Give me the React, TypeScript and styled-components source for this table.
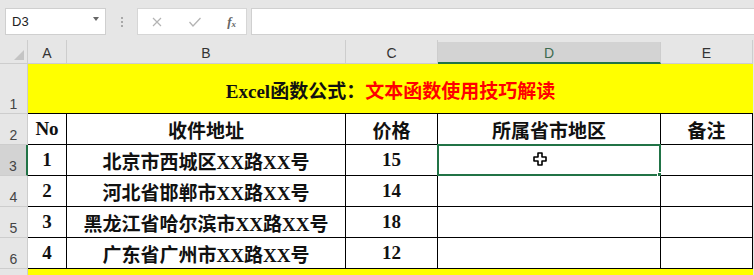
import React from "react";
import styled, { createGlobalStyle } from "styled-components";

const COLS = "28px 39px 279px 92px 223px 92px";
const GREEN = "#217346";

const rows = [
    { no: "1", addr: "北京市西城区XX路XX号", price: "15" },
    { no: "2", addr: "河北省邯郸市XX路XX号", price: "14" },
    { no: "3", addr: "黑龙江省哈尔滨市XX路XX号", price: "18" },
    { no: "4", addr: "广东省广州市XX路XX号", price: "12" },
];

export default function App() {
    return (
        <>
            <GlobalStyle />
            <Page>
                {/* --- FORMULA BAR --- */}
                <Toolbar>
                    <NameBox>
                        <span>D3</span>
                        <DropArrow />
                    </NameBox>
                    <Grip>
                        <i />
                        <i />
                        <i />
                    </Grip>
                    <FxBox>
                        <svg width="12" height="12" viewBox="0 0 12 12">
                            <path d="M2 2 L10 10 M10 2 L2 10" stroke="#b4b4b4" strokeWidth="1.2" fill="none" />
                        </svg>
                        <svg width="14" height="12" viewBox="0 0 14 12">
                            <path d="M1.5 6 L5 10 L12.5 2" stroke="#b4b4b4" strokeWidth="1.3" fill="none" />
                        </svg>
                        <FxLabel>
                            f<sub>x</sub>
                        </FxLabel>
                    </FxBox>
                    <FormulaInput />
                </Toolbar>

                {/* --- SHEET --- */}
                <Sheet>
                    <HeaderRow>
                        <Corner>
                            <svg width="10" height="10" viewBox="0 0 10 10">
                                <path d="M10 0 L10 10 L0 10 Z" fill="#c4c4c4" />
                            </svg>
                        </Corner>
                        {["A", "B", "C", "D", "E"].map((c) => (
                            <ColHead key={c} active={c === "D"}>
                                {c}
                            </ColHead>
                        ))}
                    </HeaderRow>

                    <Row height={50}>
                        <RowHead>1</RowHead>
                        <TitleCell>
                            Excel函数公式：<Red>文本函数使用技巧解读</Red>
                        </TitleCell>
                    </Row>

                    <Row height={31}>
                        <RowHead>2</RowHead>
                        <Cell>No</Cell>
                        <Cell>收件地址</Cell>
                        <Cell>价格</Cell>
                        <Cell>所属省市地区</Cell>
                        <Cell>备注</Cell>
                    </Row>

                    {rows.map((r, i) => (
                        <Row height={31} key={r.no}>
                            <RowHead active={i === 0}>{i + 3}</RowHead>
                            <Cell>{r.no}</Cell>
                            <Cell>{r.addr}</Cell>
                            <Cell>{r.price}</Cell>
                            <Cell>
                                {i === 0 && (
                                    <>
                                        <Selection>
                                            <FillHandle />
                                        </Selection>
                                        <Cursor width="14" height="14" viewBox="0 0 14 14">
                                            <path
                                                d="M5 1 H9 V5 H13 V9 H9 V13 H5 V9 H1 V5 H5 Z"
                                                fill="#fff"
                                                stroke="#000"
                                                strokeWidth="1.6"
                                                strokeLinejoin="round"
                                            />
                                        </Cursor>
                                    </>
                                )}
                            </Cell>
                            <Cell />
                        </Row>
                    ))}

                    {/* row 7 is only a sliver at the bottom edge */}
                    <Row height={10}>
                        <RowHead />
                        <YellowFill />
                    </Row>
                </Sheet>
            </Page>
        </>
    );
}

const GlobalStyle = createGlobalStyle`
    body {
        margin: 0;
        background: #e6e6e6;
        overflow: hidden;
    }
    * { box-sizing: border-box; }
`;

const Page = styled.div`
    width: 754px;
    height: 275px;
    overflow: hidden;
    background: #e6e6e6;
    font-family: "Liberation Sans", "Noto Sans CJK SC", sans-serif;
`;

/* ---- Formula bar ---- */
const Toolbar = styled.div`
    height: 40px;
    display: flex;
    align-items: flex-start;
    padding: 8px 0 0 5px;
`;

const NameBox = styled.div`
    width: 101px;
    height: 27px;
    background: #fff;
    border: 1px solid #cfcfcf;
    display: flex;
    align-items: center;
    justify-content: space-between;
    padding: 0 6px 0 6px;
    font-size: 13px;
    color: #222;
`;

const DropArrow = styled.span`
    width: 0;
    height: 0;
    border-left: 3.5px solid transparent;
    border-right: 3.5px solid transparent;
    border-top: 4px solid #666;
    margin-top: -6px;
`;

const Grip = styled.div`
    width: 31px;
    height: 27px;
    display: flex;
    flex-direction: column;
    align-items: center;
    justify-content: center;
    gap: 2px;

    i {
        width: 2px;
        height: 2px;
        background: #a8a8a8;
    }
`;

const FxBox = styled.div`
    width: 110px;
    height: 27px;
    background: #fff;
    border: 1px solid #d6d6d6;
    display: flex;
    align-items: center;
    justify-content: space-between;
    padding: 0 10px 0 13px;
`;

const FxLabel = styled.span`
    font-family: "Liberation Serif", serif;
    font-style: italic;
    font-weight: bold;
    font-size: 13px;
    color: #666;

    sub {
        font-size: 9px;
        vertical-align: -1px;
    }
`;

const FormulaInput = styled.div`
    flex: 1;
    height: 27px;
    margin-left: 4px;
    background: #fff;
    border: 1px solid #d0d0d0;
    border-right: none;
`;

/* ---- Sheet ---- */
const Sheet = styled.div`
    display: flex;
    flex-direction: column;
`;

const Row = styled.div<{ height: number }>`
    display: grid;
    grid-template-columns: ${COLS};
    height: ${({ height }) => height}px;
`;

const HeaderRow = styled(Row).attrs({ height: 24 })``;

const Corner = styled.div`
    background: #e6e6e6;
    border-right: 1px solid #cdcdcd;
    border-bottom: 1px solid #cdcdcd;
    display: flex;
    align-items: flex-end;
    justify-content: flex-end;
    padding: 0 3px 3px 0;
`;

const ColHead = styled.div<{ active?: boolean }>`
    background: ${({ active }) => (active ? "#d3d3d3" : "#e6e6e6")};
    border-right: 1px solid #cdcdcd;
    border-bottom: ${({ active }) => (active ? `2px solid ${GREEN}` : "1px solid #cdcdcd")};
    margin-top: ${({ active }) => (active ? "2px" : "0")};
    display: flex;
    align-items: flex-end;
    justify-content: center;
    padding-bottom: ${({ active }) => (active ? "1px" : "2px")};
    font-size: 14px;
    color: ${({ active }) => (active ? "#3d6b4f" : "#333")};
`;

const RowHead = styled.div<{ active?: boolean }>`
    background: ${({ active }) => (active ? "#d3d3d3" : "#e6e6e6")};
    border-right: ${({ active }) => (active ? `2px solid ${GREEN}` : "1px solid #cdcdcd")};
    border-bottom: 1px solid #cdcdcd;
    display: flex;
    align-items: flex-end;
    justify-content: center;
    padding-bottom: 1px;
    font-size: 14px;
    color: #444;
`;

const TitleCell = styled.div`
    grid-column: 2 / 7;
    background: #ffff00;
    border-bottom: 1px solid #000;
    display: flex;
    align-items: center;
    justify-content: center;
    padding-top: 2px;
    font-family: "Liberation Serif", "Noto Sans CJK SC", serif;
    font-weight: bold;
    font-size: 19px;
    color: #111;
`;

const Red = styled.span`
    color: #f00;
`;

const Cell = styled.div`
    position: relative;
    background: #fff;
    border-right: 1px solid #000;
    border-bottom: 1px solid #000;
    display: flex;
    align-items: center;
    justify-content: center;
    font-family: "Liberation Serif", "Noto Sans CJK SC", serif;
    font-weight: bold;
    font-size: 19px;
    color: #111;
`;

const Selection = styled.div`
    position: absolute;
    inset: -1px -1px -1px -1px;
    border: 2px solid ${GREEN};
    pointer-events: none;
`;

const FillHandle = styled.div`
    position: absolute;
    right: -4px;
    bottom: -4px;
    width: 6px;
    height: 6px;
    background: ${GREEN};
    border: 1px solid #fff;
`;

const Cursor = styled.svg`
    position: absolute;
    left: 95px;
    top: 7px;
`;

const YellowFill = styled.div`
    grid-column: 2 / 7;
    background: #ffff00;
`;
